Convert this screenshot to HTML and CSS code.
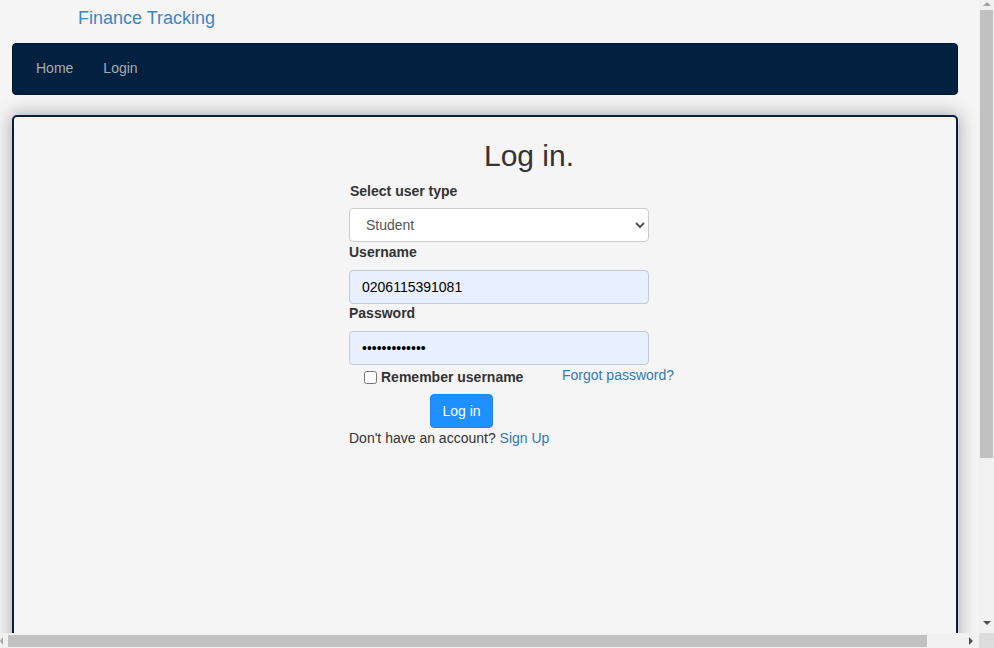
FILE: index.html
```html
<!DOCTYPE html>
<html>
<head>
<meta charset="utf-8">
<title>Log in - Finance Tracking</title>
<link rel="stylesheet" href="styles.css">
</head>
<body>
<div class="page">
  <div class="brand-row"><a class="brand" href="#">Finance Tracking</a></div>
  <nav class="navbar">
    <ul class="nav-links">
      <li><a href="#">Home</a></li>
      <li><a href="#">Login</a></li>
    </ul>
  </nav>
  <main class="card">
    <section class="login">
      <h2 class="title">Log in.</h2>
      <label class="field-label lbl-first">Select user type</label>
      <select class="control select">
        <option>Student</option>
      </select>
      <label class="field-label">Username</label>
      <input class="control autofill" type="text" value="0206115391081">
      <label class="field-label lbl-pass">Password</label>
      <input class="control autofill" type="password" value="1234567890123">
      <div class="options-row">
        <label class="remember"><input type="checkbox" class="check"><span>Remember username</span></label>
        <a class="link forgot" href="#">Forgot password?</a>
      </div>
      <button class="btn" type="button">Log in</button>
      <p class="signup">Don't have an account? <a class="link" href="#">Sign Up</a></p>
    </section>
  </main>
</div>
<div class="vscroll" aria-hidden="true">
  <span class="arrow arrow-up"></span>
  <span class="vthumb"></span>
  <span class="arrow arrow-down"></span>
</div>
<div class="hscroll" aria-hidden="true">
  <span class="arrow arrow-left"></span>
  <span class="hthumb"></span>
  <span class="arrow arrow-right"></span>
</div>
<div class="scroll-corner" aria-hidden="true"></div>
</body>
</html>
```
FILE: styles.css
```css
html, body {
  margin: 0;
  padding: 0;
  background: #f5f5f5;
}
body {
  font-family: "Liberation Sans", Arial, sans-serif;
  font-size: 14px;
  line-height: 20px;
  color: #333;
}
.page {
  width: 1025px;
  padding-bottom: 22px;
}
.brand-row {
  height: 43px;
  padding-left: 78px;
  box-sizing: border-box;
  padding-top: 7px;
}
.brand {
  font-size: 18px;
  line-height: 22px;
  color: #3a87c6;
  text-decoration: none;
}
.navbar {
  width: 946px;
  margin-left: 12px;
  height: 52px;
  box-sizing: border-box;
  background: #02203f;
  border: 1px solid #011529;
  border-radius: 4px;
}
.nav-links {
  list-style: none;
  margin: 0;
  padding: 0 0 0 8px;
  display: flex;
}
.nav-links a {
  display: block;
  padding: 14px 15px 16px;
  color: #a9adb2;
  text-decoration: none;
  font-size: 14px;
  line-height: 20px;
}
.card {
  display: block;
  width: 946px;
  margin: 20px 0 0 12px;
  height: 730px;
  box-sizing: border-box;
  border: 2px solid #02203f;
  border-radius: 5px;
  background: #f5f5f5;
  box-shadow: 0 0 18px 2px rgba(0, 0, 0, 0.28);
}
.login {
  width: 360px;
  margin-left: 335px;
  display: flex;
  flex-direction: column;
  align-items: flex-start;
}
.title {
  align-self: stretch;
  text-align: center;
  font-size: 30px;
  font-weight: normal;
  line-height: 33px;
  margin: 22px 0 9px;
  color: #333;
}
.field-label {
  font-weight: bold;
  margin-bottom: 8px;
  color: #333;
}
.lbl-first {
  margin-left: 1px;
  margin-bottom: 7px;
}
.lbl-pass {
  margin-top: -1px;
}
.control {
  width: 300px;
  height: 34px;
  box-sizing: border-box;
  border: 1px solid #ccc;
  border-radius: 4px;
  font-family: "Liberation Sans", Arial, sans-serif;
  font-size: 14px;
  padding: 6px 12px;
  margin: 0;
  color: #555;
  background: #fff;
}
.autofill {
  background: #e8f0fe;
  color: #000;
  border-color: #c6cbd3;
}
.options-row {
  display: grid;
  grid-template-columns: 213px auto;
  align-items: start;
  height: 29px;
}
.remember {
  display: flex;
  align-items: center;
  font-weight: bold;
  padding-left: 15px;
  padding-top: 2px;
}
.check {
  width: 13px;
  height: 13px;
  margin: 0 4px 0 0;
}
.link {
  color: #337ab7;
  text-decoration: none;
}
.btn {
  margin-left: 81px;
  width: 63px;
  height: 34px;
  box-sizing: border-box;
  border: 1px solid #1c86ee;
  border-radius: 4px;
  background: #1e90ff;
  color: #fff;
  font-family: "Liberation Sans", Arial, sans-serif;
  font-size: 14px;
  padding: 0;
}
.signup {
  margin: 0;
  color: #333;
}

/* imitation of the browser's classic scrollbars */
.vscroll {
  position: fixed;
  top: 0;
  right: 0;
  width: 15px;
  height: 633px;
  background: #f1f1f1;
  display: flex;
  flex-direction: column;
  align-items: center;
}
.vthumb {
  display: block;
  width: 13px;
  height: 448px;
  margin-top: 4px;
  background: #c1c1c1;
}
.hscroll {
  position: fixed;
  left: 0;
  bottom: 0;
  width: 979px;
  height: 15px;
  background: #f1f1f1;
  display: flex;
  align-items: center;
}
.hthumb {
  display: block;
  height: 12px;
  width: 919px;
  margin: 2px 0 0 5px;
  align-self: flex-start;
  background: #c1c1c1;
}
.scroll-corner {
  position: fixed;
  right: 0;
  bottom: 0;
  width: 15px;
  height: 15px;
  background: #dcdcdc;
}
.arrow {
  display: block;
  width: 0;
  height: 0;
  border-style: solid;
  border-color: transparent;
}
.arrow-up {
  margin-top: 2px;
  border-width: 0 4px 4px;
  border-bottom-color: #a3a3a3;
}
.arrow-down {
  margin-top: auto;
  margin-bottom: 8px;
  border-width: 4px 4px 0;
  border-top-color: #505050;
}
.arrow-left {
  border-width: 4px 3px 4px 0;
  border-right-color: #a3a3a3;
  margin-left: 0;
}
.arrow-right {
  margin-left: auto;
  margin-right: 6px;
  border-width: 4px 0 4px 4px;
  border-left-color: #505050;
}
```
